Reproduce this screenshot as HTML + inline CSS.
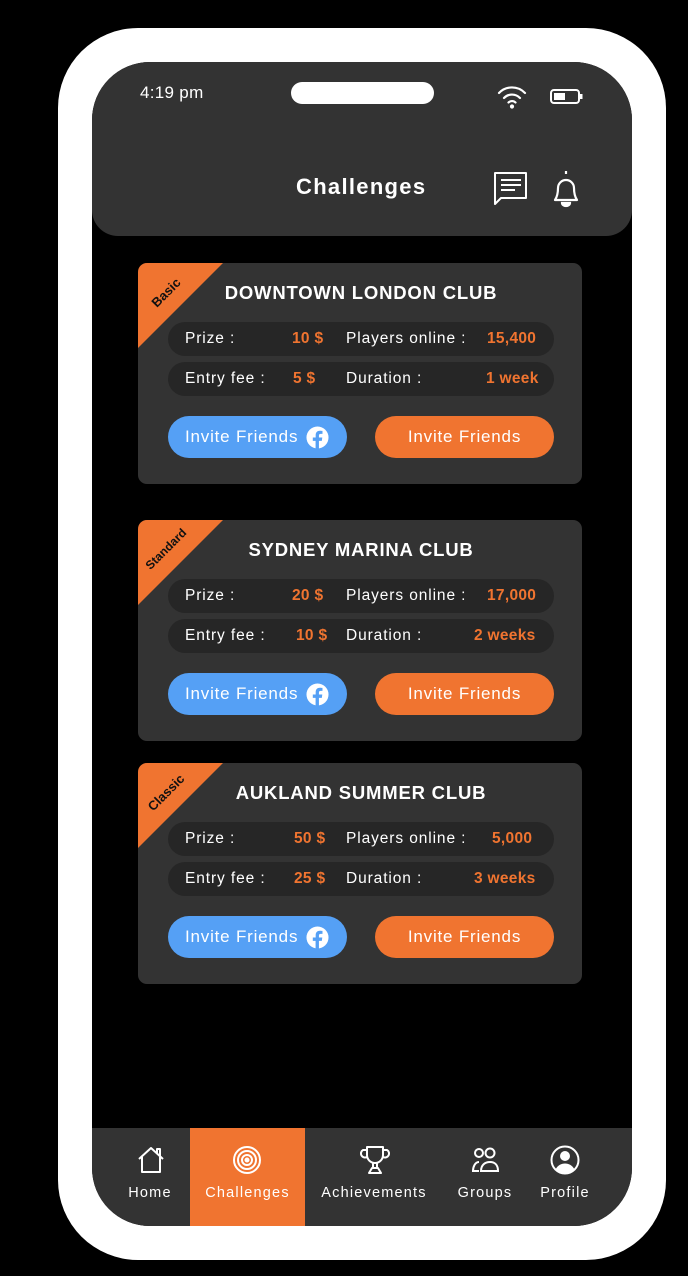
<!DOCTYPE html>
<html><head><meta charset="utf-8"><style>
*{margin:0;padding:0;box-sizing:border-box}
body{width:688px;height:1276px;background:#000;position:relative;overflow:hidden;font-family:"Liberation Sans",sans-serif;color:#fff}
.phone{position:absolute;left:58px;top:28px;width:608px;height:1232px;background:#fff;border-radius:80px}
.screen{position:absolute;left:92px;top:62px;width:540px;height:1164px;background:#000;border-radius:58px;overflow:hidden}
.hdr{position:absolute;left:0;top:0;width:540px;height:174px;background:#333;border-radius:0 0 26px 26px}
.abs{position:absolute}
.card{position:absolute;left:46px;width:444px;height:221px;background:#333;border-radius:9px;overflow:hidden}
.tri{position:absolute;left:0;top:0;width:0;height:0;border-top:85px solid #f07430;border-right:85px solid transparent}
.tag{position:absolute;font-size:13px;font-weight:bold;color:#111;transform:rotate(-45deg);transform-origin:center;width:80px;text-align:center;left:-12px;top:22px}
.title{position:absolute;left:0;width:444px;text-align:center;top:19px;font-size:18.5px;font-weight:bold;padding-left:2px;letter-spacing:0.8px}
.row{position:absolute;left:30px;width:386px;height:34px;background:#262626;border-radius:17px;font-size:15.5px;letter-spacing:0.9px}
.row span{position:absolute;top:8px}
.o{color:#f07430;font-weight:bold;letter-spacing:0.3px}
.btn{position:absolute;top:153px;width:179px;height:42px;border-radius:21px;font-size:17px;line-height:42px;letter-spacing:0.8px}
.nav{position:absolute;left:0;top:1066px;width:540px;height:98px;background:#333}
.nav .it{position:absolute;top:0;height:98px;text-align:center;font-size:14.5px;letter-spacing:1.2px}
.nav .lab{position:absolute;top:57px;left:-20px;width:calc(100% + 40px);text-align:center}
</style></head><body>
<div class="phone"></div>
<div class="screen">
 <div class="hdr">
  <div class="abs" style="left:48px;top:21px;font-size:17px;letter-spacing:0.3px">4:19 pm</div>
  <div class="abs" style="left:199px;top:20px;width:143px;height:22px;background:#fff;border-radius:11px"></div>
  <svg class="abs" style="left:404px;top:22px" width="32" height="26" viewBox="0 0 32 26" fill="none" stroke="#fff" stroke-width="2.2" stroke-linecap="round"><path d="M3 9a18 18 0 0 1 26 0"/><path d="M8 14a11 11 0 0 1 16 0"/><path d="M12.5 18.5a5 5 0 0 1 7 0"/><circle cx="16" cy="22.5" r="1" fill="#fff"/></svg>
  <svg class="abs" style="left:458px;top:27px" width="34" height="16" viewBox="0 0 34 16"><rect x="1" y="1" width="28" height="13" rx="3" fill="none" stroke="#fff" stroke-width="2"/><rect x="4" y="4" width="11" height="7" fill="#fff"/><rect x="30" y="5" width="2.5" height="5" fill="#fff"/></svg>
  <div class="abs" style="left:204px;top:112px;font-size:22px;font-weight:bold;letter-spacing:1.3px">Challenges</div>
  <svg class="abs" style="left:400px;top:108px" width="36" height="36" viewBox="0 0 36 36" fill="none" stroke="#fff" stroke-width="2"><path d="M3 3h31v25H9l-6 6z" stroke-linejoin="round"/><path d="M9 10h20M9 15h20M9 20h14"/></svg>
  <svg class="abs" style="left:456px;top:106px" width="36" height="40" viewBox="0 0 36 40" fill="none" stroke="#fff" stroke-width="2.2"><path d="M18 3v3M7 32c2-3 3-6 3-12a8 8 0 0 1 16 0c0 6 1 9 3 12z" stroke-linejoin="round"/><path d="M14 35a4 3 0 0 0 8 0z" fill="#fff"/></svg>
 </div>

 <div class="card" style="top:201px"><div class="tri"></div><div class="tag">Basic</div>
  <div class="title">DOWNTOWN LONDON CLUB</div>
  <div class="row" style="top:59px"><span style="left:17px">Prize :</span><span class="o" style="left:124px">10 $</span><span style="left:178px">Players online :</span><span class="o" style="left:319px">15,400</span></div>
  <div class="row" style="top:99px"><span style="left:17px">Entry fee :</span><span class="o" style="left:125px">5 $</span><span style="left:178px">Duration :</span><span class="o" style="left:318px">1 week</span></div>
  <div class="btn" style="left:30px;background:#55a0f5;padding-left:17px">Invite Friends<svg style="position:absolute;left:138px;top:10px" width="23" height="23" viewBox="0 0 24 24"><circle cx="12" cy="12" r="11.5" fill="#fff"/><path d="M13.5 24v-8.5h3l.5-3.5h-3.5V10c0-1 .4-1.800 1.9-1.8h1.8V5.1c-.4 0-1.5-.2-2.7-.2-2.7 0-4.4 1.6-4.4 4.6V12H7.1v3.5H10V24z" fill="#55a0f5"/></svg></div>
  <div class="btn" style="left:237px;background:#f07430;text-align:center">Invite Friends</div>
 </div>

 <div class="card" style="top:458px"><div class="tri"></div><div class="tag" style="font-size:12px">Standard</div>
  <div class="title">SYDNEY MARINA CLUB</div>
  <div class="row" style="top:59px"><span style="left:17px">Prize :</span><span class="o" style="left:124px">20 $</span><span style="left:178px">Players online :</span><span class="o" style="left:319px">17,000</span></div>
  <div class="row" style="top:99px"><span style="left:17px">Entry fee :</span><span class="o" style="left:128px">10 $</span><span style="left:178px">Duration :</span><span class="o" style="left:306px">2 weeks</span></div>
  <div class="btn" style="left:30px;background:#55a0f5;padding-left:17px">Invite Friends<svg style="position:absolute;left:138px;top:10px" width="23" height="23" viewBox="0 0 24 24"><circle cx="12" cy="12" r="11.5" fill="#fff"/><path d="M13.5 24v-8.5h3l.5-3.5h-3.5V10c0-1 .4-1.8 1.9-1.8h1.8V5.1c-.4 0-1.5-.2-2.7-.2-2.7 0-4.4 1.6-4.4 4.6V12H7.1v3.5H10V24z" fill="#55a0f5"/></svg></div>
  <div class="btn" style="left:237px;background:#f07430;text-align:center">Invite Friends</div>
 </div>

 <div class="card" style="top:701px"><div class="tri"></div><div class="tag">Classic</div>
  <div class="title">AUKLAND SUMMER CLUB</div>
  <div class="row" style="top:59px"><span style="left:17px">Prize :</span><span class="o" style="left:126px">50 $</span><span style="left:178px">Players online :</span><span class="o" style="left:324px">5,000</span></div>
  <div class="row" style="top:99px"><span style="left:17px">Entry fee :</span><span class="o" style="left:126px">25 $</span><span style="left:178px">Duration :</span><span class="o" style="left:306px">3 weeks</span></div>
  <div class="btn" style="left:30px;background:#55a0f5;padding-left:17px">Invite Friends<svg style="position:absolute;left:138px;top:10px" width="23" height="23" viewBox="0 0 24 24"><circle cx="12" cy="12" r="11.5" fill="#fff"/><path d="M13.5 24v-8.5h3l.5-3.5h-3.5V10c0-1 .4-1.8 1.9-1.8h1.8V5.1c-.4 0-1.5-.2-2.7-.2-2.7 0-4.4 1.6-4.4 4.6V12H7.1v3.5H10V24z" fill="#55a0f5"/></svg></div>
  <div class="btn" style="left:237px;background:#f07430;text-align:center">Invite Friends</div>
 </div>

 <div class="nav">
  <div class="it" style="left:22px;width:72px"><svg style="position:absolute;left:22px;top:18px" width="30" height="28" viewBox="0 0 30 28" fill="none" stroke="#fff" stroke-width="2" stroke-linejoin="round"><path d="M3 13L15 2l12 11M6 11v15h18V11"/><path d="M21 7V3h3v7" /></svg><div class="lab">Home</div></div>
  <div class="it" style="left:98px;width:115px;background:#f07430"><svg style="position:absolute;left:42px;top:17px" width="30" height="30" viewBox="0 0 30 30" fill="none" stroke="#fff" stroke-width="2"><circle cx="15" cy="15" r="13"/><circle cx="15" cy="15" r="9"/><circle cx="15" cy="15" r="5"/><circle cx="15" cy="15" r="1.5" fill="#fff"/></svg><div class="lab">Challenges</div></div>
  <div class="it" style="left:222px;width:120px"><svg style="position:absolute;left:46px;top:17px" width="30" height="30" viewBox="0 0 30 30" fill="none" stroke="#fff" stroke-width="2" stroke-linejoin="round"><path d="M7 2h16v8a8 8 0 0 1-16 0z"/><path d="M7 5H3a4 4 0 0 0 4 7M23 5h4a4 4 0 0 1-4 7M13 18v5h4v-5M9 28l3-5h6l3 5z"/></svg><div class="lab">Achievements</div></div>
  <div class="it" style="left:358px;width:70px"><svg style="position:absolute;left:20px;top:19px" width="30" height="26" viewBox="0 0 30 26" fill="none" stroke="#fff" stroke-width="2"><circle cx="9" cy="6" r="4"/><circle cx="20" cy="6" r="4.5"/><path d="M3 24c0-4 2-9 6-9M11 24c0-6 4-9 9-9s8 3 8 9z"/><path d="M2 24h7"/></svg><div class="lab">Groups</div></div>
  <div class="it" style="left:440px;width:66px"><svg style="position:absolute;left:18px;top:17px" width="30" height="30" viewBox="0 0 30 30"><circle cx="15" cy="15" r="13.5" fill="none" stroke="#fff" stroke-width="2"/><circle cx="15" cy="11" r="5" fill="#fff"/><path d="M5.5 24.5c2-4 5.5-6 9.5-6s7.5 2 9.5 6a13 13 0 0 1-19 0z" fill="#fff"/></svg><div class="lab">Profile</div></div>
 </div>
</div>
</body></html>
